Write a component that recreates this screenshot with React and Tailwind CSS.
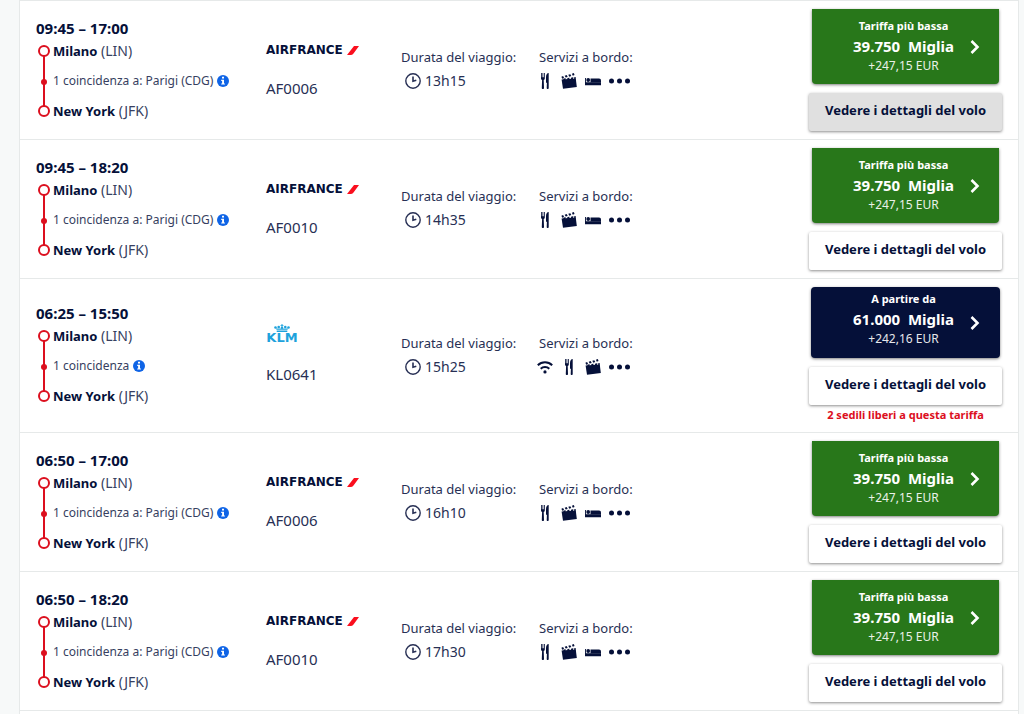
import clsx from 'clsx'

const flights = [
  { id: 1, time: '09:45 – 17:00', stop: '1 coincidenza a: Parigi (CDG)', carrier: 'AF', number: 'AF0006', duration: '13h15', services: ['meal', 'video', 'bed'], lowest: true, miles: '39.750', tax: '+247,15 EUR', hovered: true },
  { id: 2, time: '09:45 – 18:20', stop: '1 coincidenza a: Parigi (CDG)', carrier: 'AF', number: 'AF0010', duration: '14h35', services: ['meal', 'video', 'bed'], lowest: true, miles: '39.750', tax: '+247,15 EUR' },
  { id: 3, time: '06:25 – 15:50', stop: '1 coincidenza', carrier: 'KL', number: 'KL0641', duration: '15h25', services: ['wifi', 'meal', 'video'], lowest: false, miles: '61.000', tax: '+242,16 EUR', seats: '2 sedili liberi a questa tariffa' },
  { id: 4, time: '06:50 – 17:00', stop: '1 coincidenza a: Parigi (CDG)', carrier: 'AF', number: 'AF0006', duration: '16h10', services: ['meal', 'video', 'bed'], lowest: true, miles: '39.750', tax: '+247,15 EUR' },
  { id: 5, time: '06:50 – 18:20', stop: '1 coincidenza a: Parigi (CDG)', carrier: 'AF', number: 'AF0010', duration: '17h30', services: ['meal', 'video', 'bed'], lowest: true, miles: '39.750', tax: '+247,15 EUR' },
]

function WifiIcon() {
  return (
    <svg viewBox="0 0 16 16" className="w-4 h-4" fill="none" stroke="currentColor" strokeWidth="2">
      <path d="M.8 6.2a10.4 10.4 0 0 1 14.4 0" />
      <path d="M3.7 9.7a6.2 6.2 0 0 1 8.6 0" />
      <circle cx="8" cy="12.9" r="1.6" fill="currentColor" stroke="none" />
    </svg>
  )
}

function MealIcon() {
  return (
    <svg viewBox="0 0 16 16" className="w-4 h-4" fill="currentColor">
      <path d="M4 0h.8v4.3h.7V0h.8v4.3H7V0h.8v5.2c0 1-.5 1.6-1.1 1.9l.3 7.9c0 .6-.4 1-1.1 1s-1.1-.4-1.1-1l.3-7.9C4.5 6.8 4 6.2 4 5.2z" />
      <path d="M11.7 0v15c0 .6-.4 1-1 1s-1-.4-1-1l.2-5.3H9V4.2C9 1.8 10 0 11.7 0z" />
    </svg>
  )
}

function VideoIcon() {
  return (
    <svg viewBox="0 0 16 16" className="w-4 h-4" fill="currentColor">
      <path d="M.6 6.6 14.8 5.4 15.8 14 2 15.8z" />
      <path d="m.4 3.7 1.7-.6 1 2-1.9.7zM3.7 2.7l2-.6 1 2-2 .5zM7.3 1.7l2-.5 1 1.9-2 .6zM10.9.7l2-.6.6 1.9-1.7.7z" />
      <path d="m2.7 5.4 2.1-.2-.5 1.8-2.1.2zM6.5 4.9l2.1-.2-.5 1.8-2.1.2zM10.3 4.4l2.1-.2-.5 1.8-2.1.2zM13.4 4l1.2-.1.3 1.8-1.8.2z" />
    </svg>
  )
}

function BedIcon() {
  return (
    <svg viewBox="0 0 16 16" className="w-4 h-4" fill="currentColor">
      <circle cx="3.2" cy="7" r="1.9" />
      <path d="M5.5 5.5H14c1.200 0 2 .8 2 2v2H5.5z" />
      <path d="M0 5h.9v4.200H16v3H0z" />
    </svg>
  )
}

const ICONS = { wifi: WifiIcon, meal: MealIcon, video: VideoIcon, bed: BedIcon }

const SERVICE_LABELS = {
  wifi: 'Wi-Fi',
  meal: 'Pasto',
  video: 'Intrattenimento',
  bed: 'Poltrona letto',
}

function AirFranceLogo() {
  return (
    <div className="flex items-center h-5 text-[#051039]">
      <span className="font-['DejaVu_Sans',sans-serif] font-bold text-xs leading-5">AIRFRANCE</span>
      <svg viewBox="0 0 12 9" className="w-3 h-[9px] ml-1" aria-hidden="true">
        <path d="M7 0h5L6.500 7.500Q5.400 9 3.500 9H0z" fill="#fa0f1e" />
      </svg>
    </div>
  )
}

function KlmLogo() {
  return (
    <div className="flex flex-col items-center justify-end w-8 h-5 pb-[2px] text-[#1ea2dc]">
      <svg viewBox="0 0 16 8" className="w-4 h-2 shrink-0" fill="currentColor" aria-hidden="true">
        <path d="M7.500 0h1v1h1v.8h-1v1h-1v-1h-1V1h1z" />
        <circle cx="1.500" cy="3.500" r="1.300" />
        <circle cx="4.700" cy="3" r="1.300" />
        <circle cx="8" cy="3.700" r="1.200" />
        <circle cx="11.300" cy="3" r="1.300" />
        <circle cx="14.500" cy="3.500" r="1.300" />
        <path d="M1.800 4.500h12.400l-.8 1.200H2.600zM2.700 6.400h10.600V8H2.700z" />
      </svg>
      <span className="font-['DejaVu_Sans',sans-serif] font-bold text-[13px] leading-3">KLM</span>
    </div>
  )
}

function Route({ time, stop }) {
  return (
    <div className="pb-[2px] text-sm leading-5">
      <p className="text-[15px] leading-5 font-bold">{time}</p>
      <div className="flex mt-[3px] pl-[2px] gap-[3px]">
        <svg viewBox="0 0 12 80" className="w-3 h-20 shrink-0" aria-hidden="true">
          <path d="M6 10v60" stroke="#dc0f1e" strokeWidth="2" />
          <circle cx="6" cy="41" r="3" fill="#dc0f1e" />
          <circle cx="6" cy="10" r="5" fill="#fff" stroke="#dc0f1e" strokeWidth="2" />
          <circle cx="6" cy="70" r="5" fill="#fff" stroke="#dc0f1e" strokeWidth="2" />
        </svg>
        <div className="flex flex-col gap-[10px]">
          <p><strong className="text-[13px]">Milano</strong> <span className="text-[#373f61]">(LIN)</span></p>
          <p className="flex items-center gap-1 text-xs leading-5 text-[#373f61]">
            {stop}
            <button type="button" aria-label="Informazioni sullo scalo">
              <svg viewBox="0 0 12 12" className="w-3 h-3">
                <circle cx="6" cy="6" r="6" fill="#0f64e6" />
                <path d="M5 1.800h2v1.700H5zM4.200 4.700H7v3.700h.9v1.200H4.200V8.400h.9V5.900h-.9z" fill="#fff" />
              </svg>
            </button>
          </p>
          <p><strong className="text-[13px]">New York</strong> <span className="text-[#373f61]">(JFK)</span></p>
        </div>
      </div>
    </div>
  )
}

function FareButton({ lowest, miles, tax }) {
  return (
    <button
      type="button"
      className={clsx(
        'grid grid-cols-[1fr_auto_1fr] items-center pr-1 text-white shadow-[0_1px_3px_rgba(0,0,0,0.5)]',
        lowest ? 'w-[187px] h-[75px] rounded-b bg-[#28771a]' : 'w-[189px] h-[71px] rounded bg-[#051039]'
      )}
    >
      <span />
      <span className={clsx('flex flex-col items-center leading-5', lowest ? 'pb-[2px]' : 'pb-2')}>
        <span className="text-[11px] leading-5 font-bold">{lowest ? 'Tariffa più bassa' : 'A partire da'}</span>
        <span className="text-[15px] leading-5 font-bold whitespace-pre">{miles}  Miglia</span>
        <span className="text-xs leading-5 opacity-90">{tax}</span>
      </span>
      <svg viewBox="0 0 10 14" className="w-[10px] h-[14px] ml-4" fill="none" stroke="currentColor" strokeWidth="2.6" aria-hidden="true">
        <path d="m1.500 1 6 6-6 6" />
      </svg>
    </button>
  )
}

function FlightRow({ flight }) {
  return (
    <li className="grid grid-cols-[230fr_135fr_136fr_272fr_193px] items-center px-4 border-b border-[#e6e9e9]">
      <Route time={flight.time} stop={flight.stop} />

      <div className="flex flex-col gap-[18px] pb-[2px]">
        {flight.carrier === 'AF' ? <AirFranceLogo /> : <KlmLogo />}
        <p className="text-[15px] leading-5 text-[#272f54]">{flight.number}</p>
      </div>

      <div className="pb-[2px] text-[13px] leading-6 text-[#272f54]">
        <p className="whitespace-nowrap">Durata del viaggio:</p>
        <p className="flex items-center gap-1 pl-1 text-sm leading-6">
          <svg viewBox="0 0 16 16" className="w-4 h-4" fill="none" stroke="currentColor" strokeWidth="1.4" aria-hidden="true">
            <circle cx="8" cy="8" r="7.200" />
            <path d="M8 3.500V8.200l3.300-1" strokeWidth="1.6" />
          </svg>
          {flight.duration}
        </p>
      </div>

      <div className="pb-[2px] text-[13px] leading-6 text-[#272f54]">
        <p className="pl-[2px] whitespace-nowrap">Servizi a bordo:</p>
        <div className="flex items-center gap-2 h-6 text-[#051039]">
          {flight.services.map(name => {
            const Icon = ICONS[name]
            return <span key={name} title={SERVICE_LABELS[name]}><Icon /></span>
          })}
          <button type="button" aria-label="Altri servizi">
            <svg viewBox="0 0 21 6" className="w-[21px] h-[6px]" fill="currentColor">
              <circle cx="2.500" cy="3" r="2.500" />
              <circle cx="10.500" cy="3" r="2.500" />
              <circle cx="18.500" cy="3" r="2.500" />
            </svg>
          </button>
        </div>
      </div>

      <div className="flex flex-col items-center py-2">
        <FareButton lowest={flight.lowest} miles={flight.miles} tax={flight.tax} />
        <button
          type="button"
          className={clsx(
            'w-full h-[38px] mt-[9px] pb-[2px] rounded-xs text-[13px] font-bold whitespace-nowrap shadow-[0_1px_3px_rgba(0,0,0,0.45)]',
            flight.hovered ? 'bg-[#e0e0e0]' : 'bg-white'
          )}
        >
          Vedere i dettagli del volo
        </button>
        {flight.seats && (
          <p className="text-[11px] leading-[19px] font-bold text-[#dc0f1e] whitespace-nowrap">{flight.seats}</p>
        )}
      </div>
    </li>
  )
}

export default function App() {
  return (
    <main className="min-h-screen pl-[19px] pr-[5px] bg-[#f7f9f9] font-['Noto_Sans',sans-serif] text-[#051039]">
      <ul className="min-h-screen bg-white border-x border-t border-[#e6e9e9]">
        {flights.map(flight => <FlightRow key={flight.id} flight={flight} />)}
      </ul>
    </main>
  )
}
